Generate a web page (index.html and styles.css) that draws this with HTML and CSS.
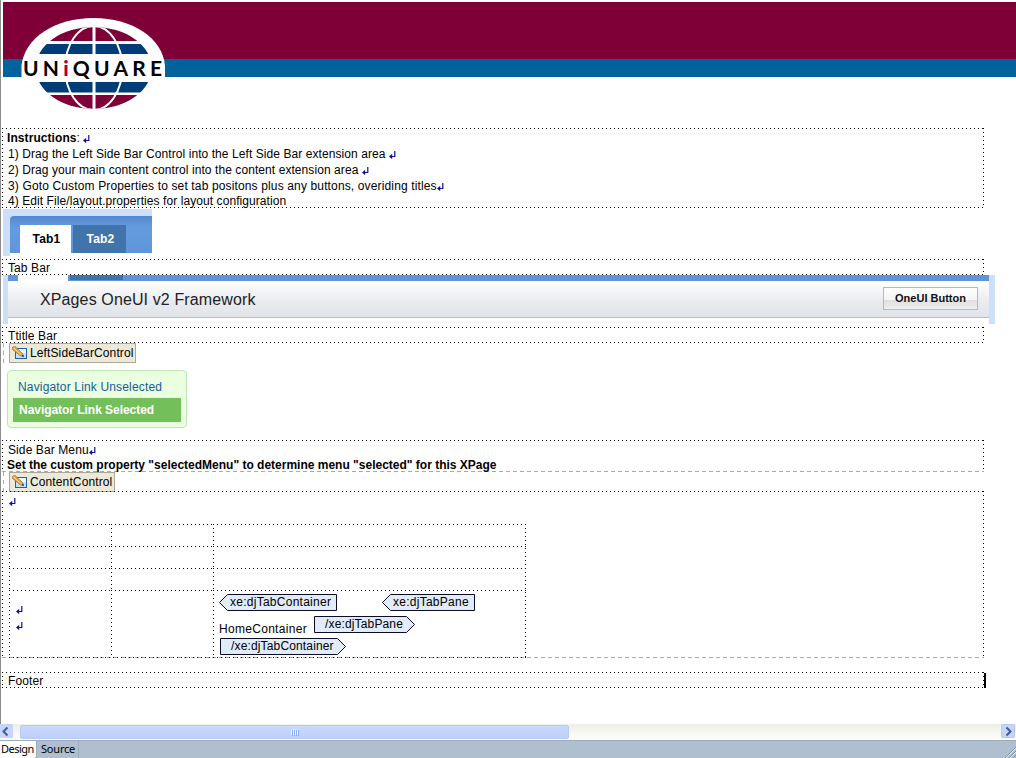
FILE: index.html
```
<!DOCTYPE html>
<html lang="en">
<head>
<meta charset="utf-8">
<title>XPages Designer</title>
<link rel="stylesheet" href="styles.css">
</head>
<body>
<svg width="0" height="0" class="defs">
  <symbol id="ret" viewBox="0 0 7 8"><path d="M5.800 0v5.500H2" fill="none" stroke="#10108c" stroke-width="1.200"/><path d="M0 5.500L3.200 2.800V8.200z" fill="#10108c"/></symbol>
  <symbol id="pencil" viewBox="0 0 17 14"><rect x="3.500" y="2.500" width="11" height="10" fill="#c4e2ff" stroke="#1c62ac"/><path d="M4 3h10v4H4z" fill="#f2faff"/><path d="M-.500 2.500L2.500 0 10.500 7.500l.8 3-3-.7z" fill="#e9a94c" stroke="#8d6335" stroke-width=".7"/><path d="M1.500 1.800l7.500 7" stroke="#ffd890"/><path d="M9.800 9.800l2 1.400-.5-2.400z" fill="#222"/></symbol>
</svg>
<div class="app">
  <main class="canvas">
    <header class="banner">
      <div class="banner-red"></div>
      <div class="banner-blue"></div>
      <svg class="logo" width="160" height="104" viewBox="14 14 160 104">
        <defs><clipPath id="globe"><ellipse cx="93.700" cy="68" rx="58" ry="41"/></clipPath></defs>
        <path d="M21.500 77V66C24 38 55 18 93.500 18S163 38 165 66V77z" fill="#fff"/>
        <g clip-path="url(#globe)">
          <path d="M30 27h130v14H30zM30 95h130v15H30z" fill="#7e0036"/>
          <path d="M30 44h130v10H30zM30 82h130v10.500H30z" fill="#003c78"/>
          <path d="M94 26v85" stroke="#fff" stroke-width="3"/>
          <ellipse cx="93.700" cy="68" rx="28.500" ry="42" fill="none" stroke="#fff" stroke-width="2"/>
        </g>
        <text x="23" y="76" textLength="139" class="logo-text">UN<tspan class="logo-i">i</tspan>QUARE</text>
      </svg>
    </header>

    <section class="box instructions">
      <p class="t1"><b>Instructions</b>: <svg class="ret"><use href="#ret"/></svg></p>
      <p>1) Drag the Left Side Bar Control into the Left Side Bar extension area <svg class="ret"><use href="#ret"/></svg></p>
      <p>2) Drag your main content control into the content extension area <svg class="ret"><use href="#ret"/></svg></p>
      <p class="t4">3) Goto Custom Properties to set tab positons plus any buttons, overiding titles<svg class="ret"><use href="#ret"/></svg></p>
      <p class="t5">4) Edit File/layout.properties for layout configuration</p>
    </section>

    <div class="tabs"><div class="tabs-in"><span class="tab on">Tab1</span><span class="tab">Tab2</span></div></div>
    <section class="box line tabbar">Tab Bar</section>

    <div class="title">
      <div class="title-top"><i class="gap"></i><i class="dark"></i></div>
      <div class="title-body"><h1>XPages OneUI v2 Framework</h1><span class="button">OneUI Button</span></div>
    </div>
    <section class="box line titlebar">Ttitle Bar</section>

    <div class="control-row"><div class="control left-control"><svg class="pencil"><use href="#pencil"/></svg><span>LeftSideBarControl</span></div></div>

    <nav class="nav"><span class="link">Navigator Link Unselected</span><span class="link selected">Navigator Link Selected</span></nav>

    <section class="box side">
      <p class="side-menu">Side Bar Menu<svg class="ret"><use href="#ret"/></svg></p>
      <p class="custom"><b>Set the custom property "selectedMenu" to determine menu "selected" for this XPage</b></p>
    </section>

    <div class="control-row"><div class="control content-control"><svg class="pencil"><use href="#pencil"/></svg><span>ContentControl</span></div></div>

    <section class="box content">
      <svg class="ret first"><use href="#ret"/></svg>
      <div class="grid">
        <i></i><i></i><i></i><i></i><i></i><i></i><i></i><i></i><i></i>
        <div class="cell returns"><svg class="ret"><use href="#ret"/></svg><svg class="ret"><use href="#ret"/></svg></div>
        <div class="cell"></div>
        <div class="cell tags">
          <div class="tag-row">
            <div class="tag"><svg width="118" height="17"><path d="M8.500.500H117.500V16.500H8.500L.500 8.500z"/></svg><span>xe:djTabContainer</span></div>
            <div class="tag"><svg width="93" height="17"><path d="M8.500.500H92.500V16.500H8.500L.500 8.500z"/></svg><span>xe:djTabPane</span></div>
          </div>
          <div class="tag-row second">
            <span class="home">HomeContainer</span>
            <div class="tag"><svg width="101" height="17"><path d="M.500.500H92.500L100.500 8.500 92.500 16.500H.500z"/></svg><span class="closing">/xe:djTabPane</span></div>
          </div>
          <div class="tag-row third">
            <div class="tag"><svg width="126" height="17"><path d="M.500.500H117.500L125.500 8.500 117.500 16.500H.500z"/></svg><span class="closing">/xe:djTabContainer</span></div>
          </div>
        </div>
      </div>
    </section>

    <section class="box line footer">Footer<span class="caret"></span></section>
  </main>

  <div class="scroll">
    <svg class="arrow" width="14" height="15"><rect width="13" height="14" rx="1" fill="#c6d5fd"/><path d="M7.500 3.500l-4 4 4 4" fill="none" stroke="#445a90" stroke-width="2"/></svg>
    <div class="thumb"><i></i><i></i><i></i><i></i></div>
    <svg class="arrow right" width="15" height="15"><rect x=".5" y=".5" width="13" height="13" rx="1" fill="#c6d5fd" stroke="#b5c6f0"/><path d="M5.500 3.500l4 4-4 4" fill="none" stroke="#445a90" stroke-width="2"/></svg>
  </div>
  <div class="bottom"><span class="view on">Design</span><span class="view">Source</span>
    <svg class="grip" width="12" height="12"><path d="M1 12L12 1M5 12L12 5M9 12L12 9" stroke="#8293a6"/><path d="M2 12L12 2M6 12L12 6" stroke="#e2e8ee"/></svg></div>
</div>
</body>
</html>
```
FILE: styles.css
```
* { box-sizing: border-box; }
body { margin: 0; font: 12px/16px "Liberation Sans", Arial, sans-serif; color: #000; background: #fff; }
p, h1 { margin: 0; white-space: nowrap; }
.defs { display: block; position: absolute; }
.app { width: 1016px; height: 758px; display: flex; flex-direction: column; overflow: hidden; }
.canvas { height: 724px; flex: none; border-left: 1px solid #8c8c8c; display: flex; flex-direction: column; padding: 2px 0 0 1px; }

.banner { height: 126px; margin-left: 1px; position: relative; flex: none; }
.banner-red { height: 57px; background: #7e0036; }
.banner-blue { height: 18px; background: #00639c; }
.logo { position: absolute; left: 11px; top: 12px; }
.logo-text { font: 700 21px Lato, sans-serif; fill: #000; }
.logo-i { fill: #a8003c; font-weight: 900; }

.box {
  --d: #000 0 1px, transparent 1px 4px;
  width: 982px; flex: none; padding-left: 6px;
  background:
    repeating-linear-gradient(90deg, var(--d)) 0 0 / 100% 1px no-repeat,
    repeating-linear-gradient(90deg, var(--d)) 0 100% / 100% 1px no-repeat,
    repeating-linear-gradient(180deg, var(--d)) 0 0 / 1px 100% no-repeat,
    repeating-linear-gradient(180deg, var(--d)) 100% 0 / 1px 100% no-repeat;
}
.ret { width: 7px; height: 8px; vertical-align: -1px; }
.instructions { height: 80px; padding-top: 2px; letter-spacing: .075px; }
.instructions p { height: 16px; }
.instructions .t1 { margin-left: -1px; }
.instructions .t4 { letter-spacing: .14px; }
.instructions .t5 { margin-top: -1px; }

.tabs { width: 149px; height: 47px; margin: 1px 0 3px 1px; padding: 7px 0 0 7px; background: linear-gradient(#fff, #fff) 7px 44px / 142px 3px no-repeat, #cddffa; flex: none; }
.tabs-in { height: 37px; padding: 9px 0 0 10px; border-radius: 4px 0 0 0; background: linear-gradient(#5489cc, #659ce0 12px, #5f96da); display: flex; gap: 2px; }
.tab { width: 53px; height: 28px; padding-left: 2px; background: #4274ac; color: #fff; font: bold 12px/29px "Liberation Sans", sans-serif; text-align: center; letter-spacing: .2px; }
.tab.on { width: 51px; background: #fff; color: #000; }
.line { height: 16px; line-height: 19px; letter-spacing: .1px; }

.title { width: 992px; height: 49px; margin: 0 0 3px 1px; flex: none; border: solid #cddffa; border-width: 0 6px 0 5px; }
.title-top { height: 6px; background: #5f96da; display: flex; padding-left: 10px; gap: 2px; }
.gap { width: 50px; background: #fff; }
.dark { width: 53px; height: 5px; background: #4274ac; }
.title-body { height: 37px; padding: 0 11px 0 32px; display: flex; justify-content: space-between; align-items: center; background: linear-gradient(#fff, #e8eaee 60%, #e0e4e8); border-bottom: 1px solid #bbbec2; }
h1 { font: 16px/20px "Liberation Sans", sans-serif; letter-spacing: .12px; color: #222; padding-top: 2px; }
.button { width: 95px; height: 23px; margin-top: -1px; border: 1px solid #b8b8b8; background: linear-gradient(#fff, #f4f4f4 55%, #dedede 56%, #eee); font: bold 11px/21px "Liberation Sans", sans-serif; text-align: center; color: #111; }

.control-row { height: 20px; flex: none; padding-left: 6px; margin-left: 1px; background: repeating-linear-gradient(#b0aca0 0 4px, transparent 4px 8px) 0 0 / 1px 100% no-repeat; }
.titlebar + .control-row { margin-bottom: 7px; }
.control { height: 20px; border: 1px solid #aca899; background: #ece9d8; display: flex; padding: 2px 0 0 2px; line-height: 15px; white-space: nowrap; letter-spacing: .12px; }
.left-control { width: 127px; }
.content-control { width: 106px; }
.pencil { width: 17px; height: 14px; margin: 0 1px 0 0; flex: none; overflow: visible; }

.nav { width: 180px; height: 58px; margin: 0 0 12px 5px; flex: none; border: 1px solid #bee6b4; border-radius: 4px; background: #e9ffdf; padding: 5px; display: flex; flex-direction: column; }
.link { height: 22px; line-height: 23px; padding-left: 5px; color: #205a9c; letter-spacing: .16px; }
.link.selected { height: 24px; line-height: 25px; padding-left: 6px; background: #73bf5a; color: #fff; font-weight: bold; letter-spacing: -.04px; }

.side, .content { background:
    repeating-linear-gradient(90deg, var(--d)) 0 0 / 100% 1px no-repeat,
    repeating-linear-gradient(90deg, #aaa 0 4px, transparent 4px 7px) 0 100% / 100% 1px no-repeat,
    repeating-linear-gradient(180deg, var(--d)) 0 0 / 1px 100% no-repeat,
    repeating-linear-gradient(180deg, var(--d)) 100% 0 / 1px 100% no-repeat; }
.side { height: 32px; padding-top: 2px; }
.side-menu { letter-spacing: .1px; }
.side .custom { margin: -1px 0 0 -1px; }
.content { height: 167px; margin-top: -1px; padding-left: 7px; display: flex; flex-direction: column; }
.first { margin: 7px 0 1px 0; flex: none; }
.grid {
  width: 517px; height: 134px; margin-top: 17px; display: grid; grid-template: 22px 22px 22px 68px / 102px 102px 313px;
  background:
    repeating-linear-gradient(90deg, var(--d)) 0 100% / 100% 1px no-repeat,
    repeating-linear-gradient(180deg, var(--d)) 100% 0 / 1px 100% no-repeat;
}
.grid > * { background:
    repeating-linear-gradient(90deg, var(--d)) 0 0 / 100% 1px no-repeat,
    repeating-linear-gradient(180deg, var(--d)) 0 0 / 1px 100% no-repeat; }
.returns { display: flex; flex-direction: column; gap: 8px; padding: 16px 0 0 7px; }
.tags { padding: 4px 0 0 6px; }
.tag-row { display: flex; gap: 45px; height: 22px; }
.tag-row.second { gap: 7px; }
.home { line-height: 26px; width: 88px; letter-spacing: .3px; }
.tag-row.third { padding-left: 1px; }
.tag { display: grid; height: 17px; }
.tag > * { grid-area: 1 / 1; }
.tag path { fill: #e2ebf8; stroke: #0b0b2c; }
.tag span { padding-left: 11px; line-height: 16px; letter-spacing: .26px; }
.tag span.closing { letter-spacing: .15px; }
.footer { margin-top: 14px; display: flex; justify-content: space-between; }
.caret { width: 2px; height: 15px; margin: 1px -2px 0 0; background: #000; }

.scroll { height: 16px; flex: none; display: flex; align-items: center; background: linear-gradient(#efefe8, #fdfdfa); }
.scroll > * { margin-top: -1px; }
.thumb { width: 549px; height: 14px; margin-left: 6px; border: solid #fff; border-width: 1px 1px 1px 0; outline: 1px solid #b7c9f4; outline-offset: -1px; border-radius: 2px; background: linear-gradient(#c8d8ff, #bdd0fb); display: flex; gap: 1px; align-items: center; justify-content: center; }
.thumb i { width: 1px; height: 6px; background: #eef4fe; box-shadow: 1px 1px #8cb0f8; }
.right { margin-left: auto; }
.bottom { height: 18px; flex: none; background: #afbfcf; border-top: 1px solid #9eabb9; display: flex; }
.view { width: 42px; padding-left: 4px; border-right: 1px solid #9eabb9; white-space: nowrap; font: 11px/15px "Noto Sans", sans-serif; letter-spacing: -.2px; }
.view.on { width: 37px; padding-left: 1px; background: #fff; border-radius: 0 0 3px 0; letter-spacing: -.5px; }
.grip { margin: 5px 0 0 auto; }
```
